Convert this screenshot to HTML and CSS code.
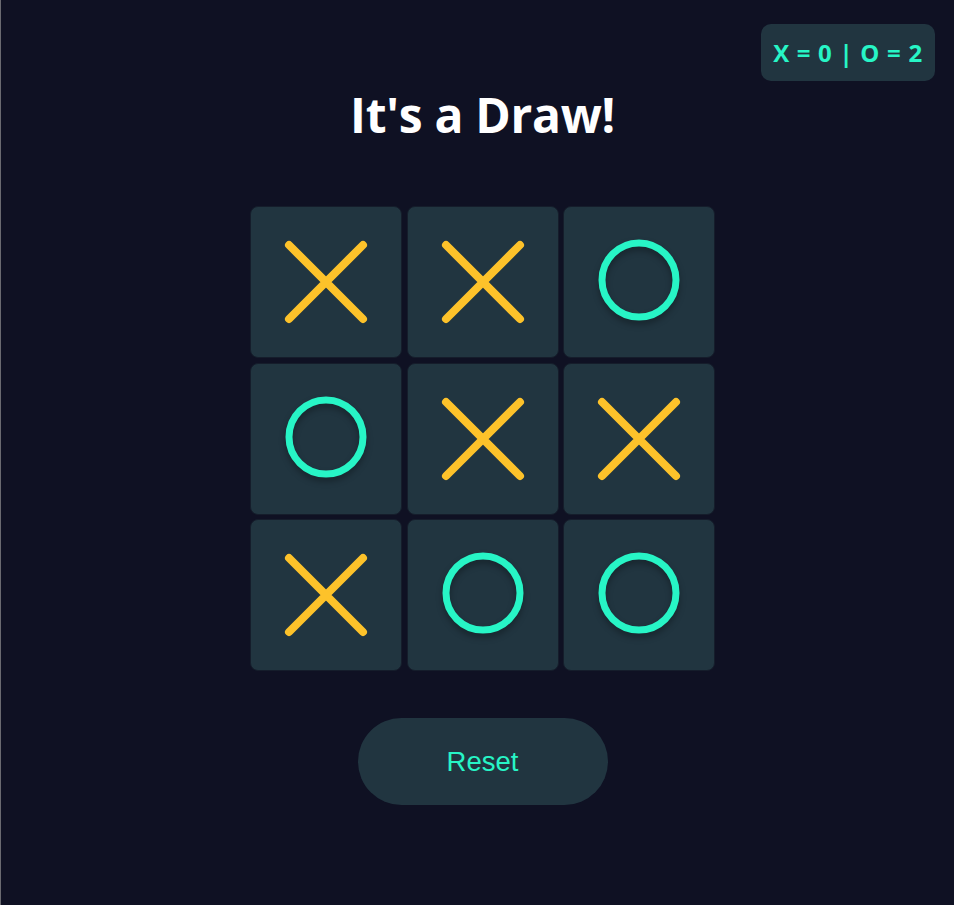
FILE: index.html
```html
<!DOCTYPE html>
<html lang="en">
<head>
<meta charset="utf-8">
<title>Tic Tac Toe</title>
<link rel="stylesheet" href="styles.css">
</head>
<body>
<main class="game">
  <div class="score">X = 0 | O = 2</div>
  <h1 class="status">It's a Draw!</h1>
  <div class="board">
    <div class="cell"><svg class="mark" viewBox="0 0 150 150"><path class="x" d="M38 38 L112 112 M112 38 L38 112"/></svg></div>
    <div class="cell"><svg class="mark" viewBox="0 0 150 150"><path class="x" d="M38 38 L112 112 M112 38 L38 112"/></svg></div>
    <div class="cell"><svg class="mark" viewBox="0 0 150 150"><circle class="o" cx="75" cy="73" r="37"/></svg></div>
    <div class="cell"><svg class="mark" viewBox="0 0 150 150"><circle class="o" cx="75" cy="73" r="37"/></svg></div>
    <div class="cell"><svg class="mark" viewBox="0 0 150 150"><path class="x" d="M38 38 L112 112 M112 38 L38 112"/></svg></div>
    <div class="cell"><svg class="mark" viewBox="0 0 150 150"><path class="x" d="M38 38 L112 112 M112 38 L38 112"/></svg></div>
    <div class="cell"><svg class="mark" viewBox="0 0 150 150"><path class="x" d="M38 38 L112 112 M112 38 L38 112"/></svg></div>
    <div class="cell"><svg class="mark" viewBox="0 0 150 150"><circle class="o" cx="75" cy="73" r="37"/></svg></div>
    <div class="cell"><svg class="mark" viewBox="0 0 150 150"><circle class="o" cx="75" cy="73" r="37"/></svg></div>
  </div>
  <button class="reset">Reset</button>
</main>
</body>
</html>
```
FILE: styles.css
```css
html, body {
  margin: 0;
  padding: 0;
  height: 100%;
  background: #0f1123;
}
body {
  border-left: 1px solid #6a6a70;
  box-sizing: border-box;
  font-family: "Open Sans", "Noto Sans", sans-serif;
}
.game {
  position: relative;
  min-height: 100%;
  box-sizing: border-box;
  padding: 82px 0 0 10px;
  display: flex;
  flex-direction: column;
  align-items: center;
}
.score {
  position: absolute;
  top: 24px;
  right: 19px;
  width: 174px;
  height: 57px;
  box-sizing: border-box;
  display: flex;
  align-items: center;
  justify-content: center;
  background: #213540;
  border-radius: 10px;
  color: #27f5c6;
  font-weight: 700;
  font-size: 24px;
  letter-spacing: 0.7px;
  white-space: pre;
}
.status {
  margin: 0;
  color: #ffffff;
  font-size: 48px;
  font-weight: 700;
  line-height: 65px;
  letter-spacing: -0.3px;
}
.board {
  margin-top: 59px;
  display: grid;
  grid-template-columns: repeat(3, 152px);
  grid-auto-rows: 152px;
  gap: 4.5px;
}
.cell {
  box-sizing: border-box;
  background: #213540;
  border: 1px solid #151d2b;
  border-radius: 8px;
  display: flex;
  align-items: center;
  justify-content: center;
}
.mark {
  width: 150px;
  height: 150px;
  overflow: visible;
}
.x {
  stroke: #fdc22a;
  stroke-width: 8;
  stroke-linecap: round;
  fill: none;
}
.o {
  stroke: #27f5c6;
  stroke-width: 7;
  fill: none;
  filter: drop-shadow(0 4px 3px rgba(0, 0, 0, 0.3));
}
.reset {
  margin-top: 47px;
  width: 250px;
  height: 87px;
  border: none;
  border-radius: 44px;
  background: #213540;
  color: #27f5c6;
  font-family: "Liberation Sans", Arial, sans-serif;
  font-size: 27.5px;
  cursor: pointer;
}
```
